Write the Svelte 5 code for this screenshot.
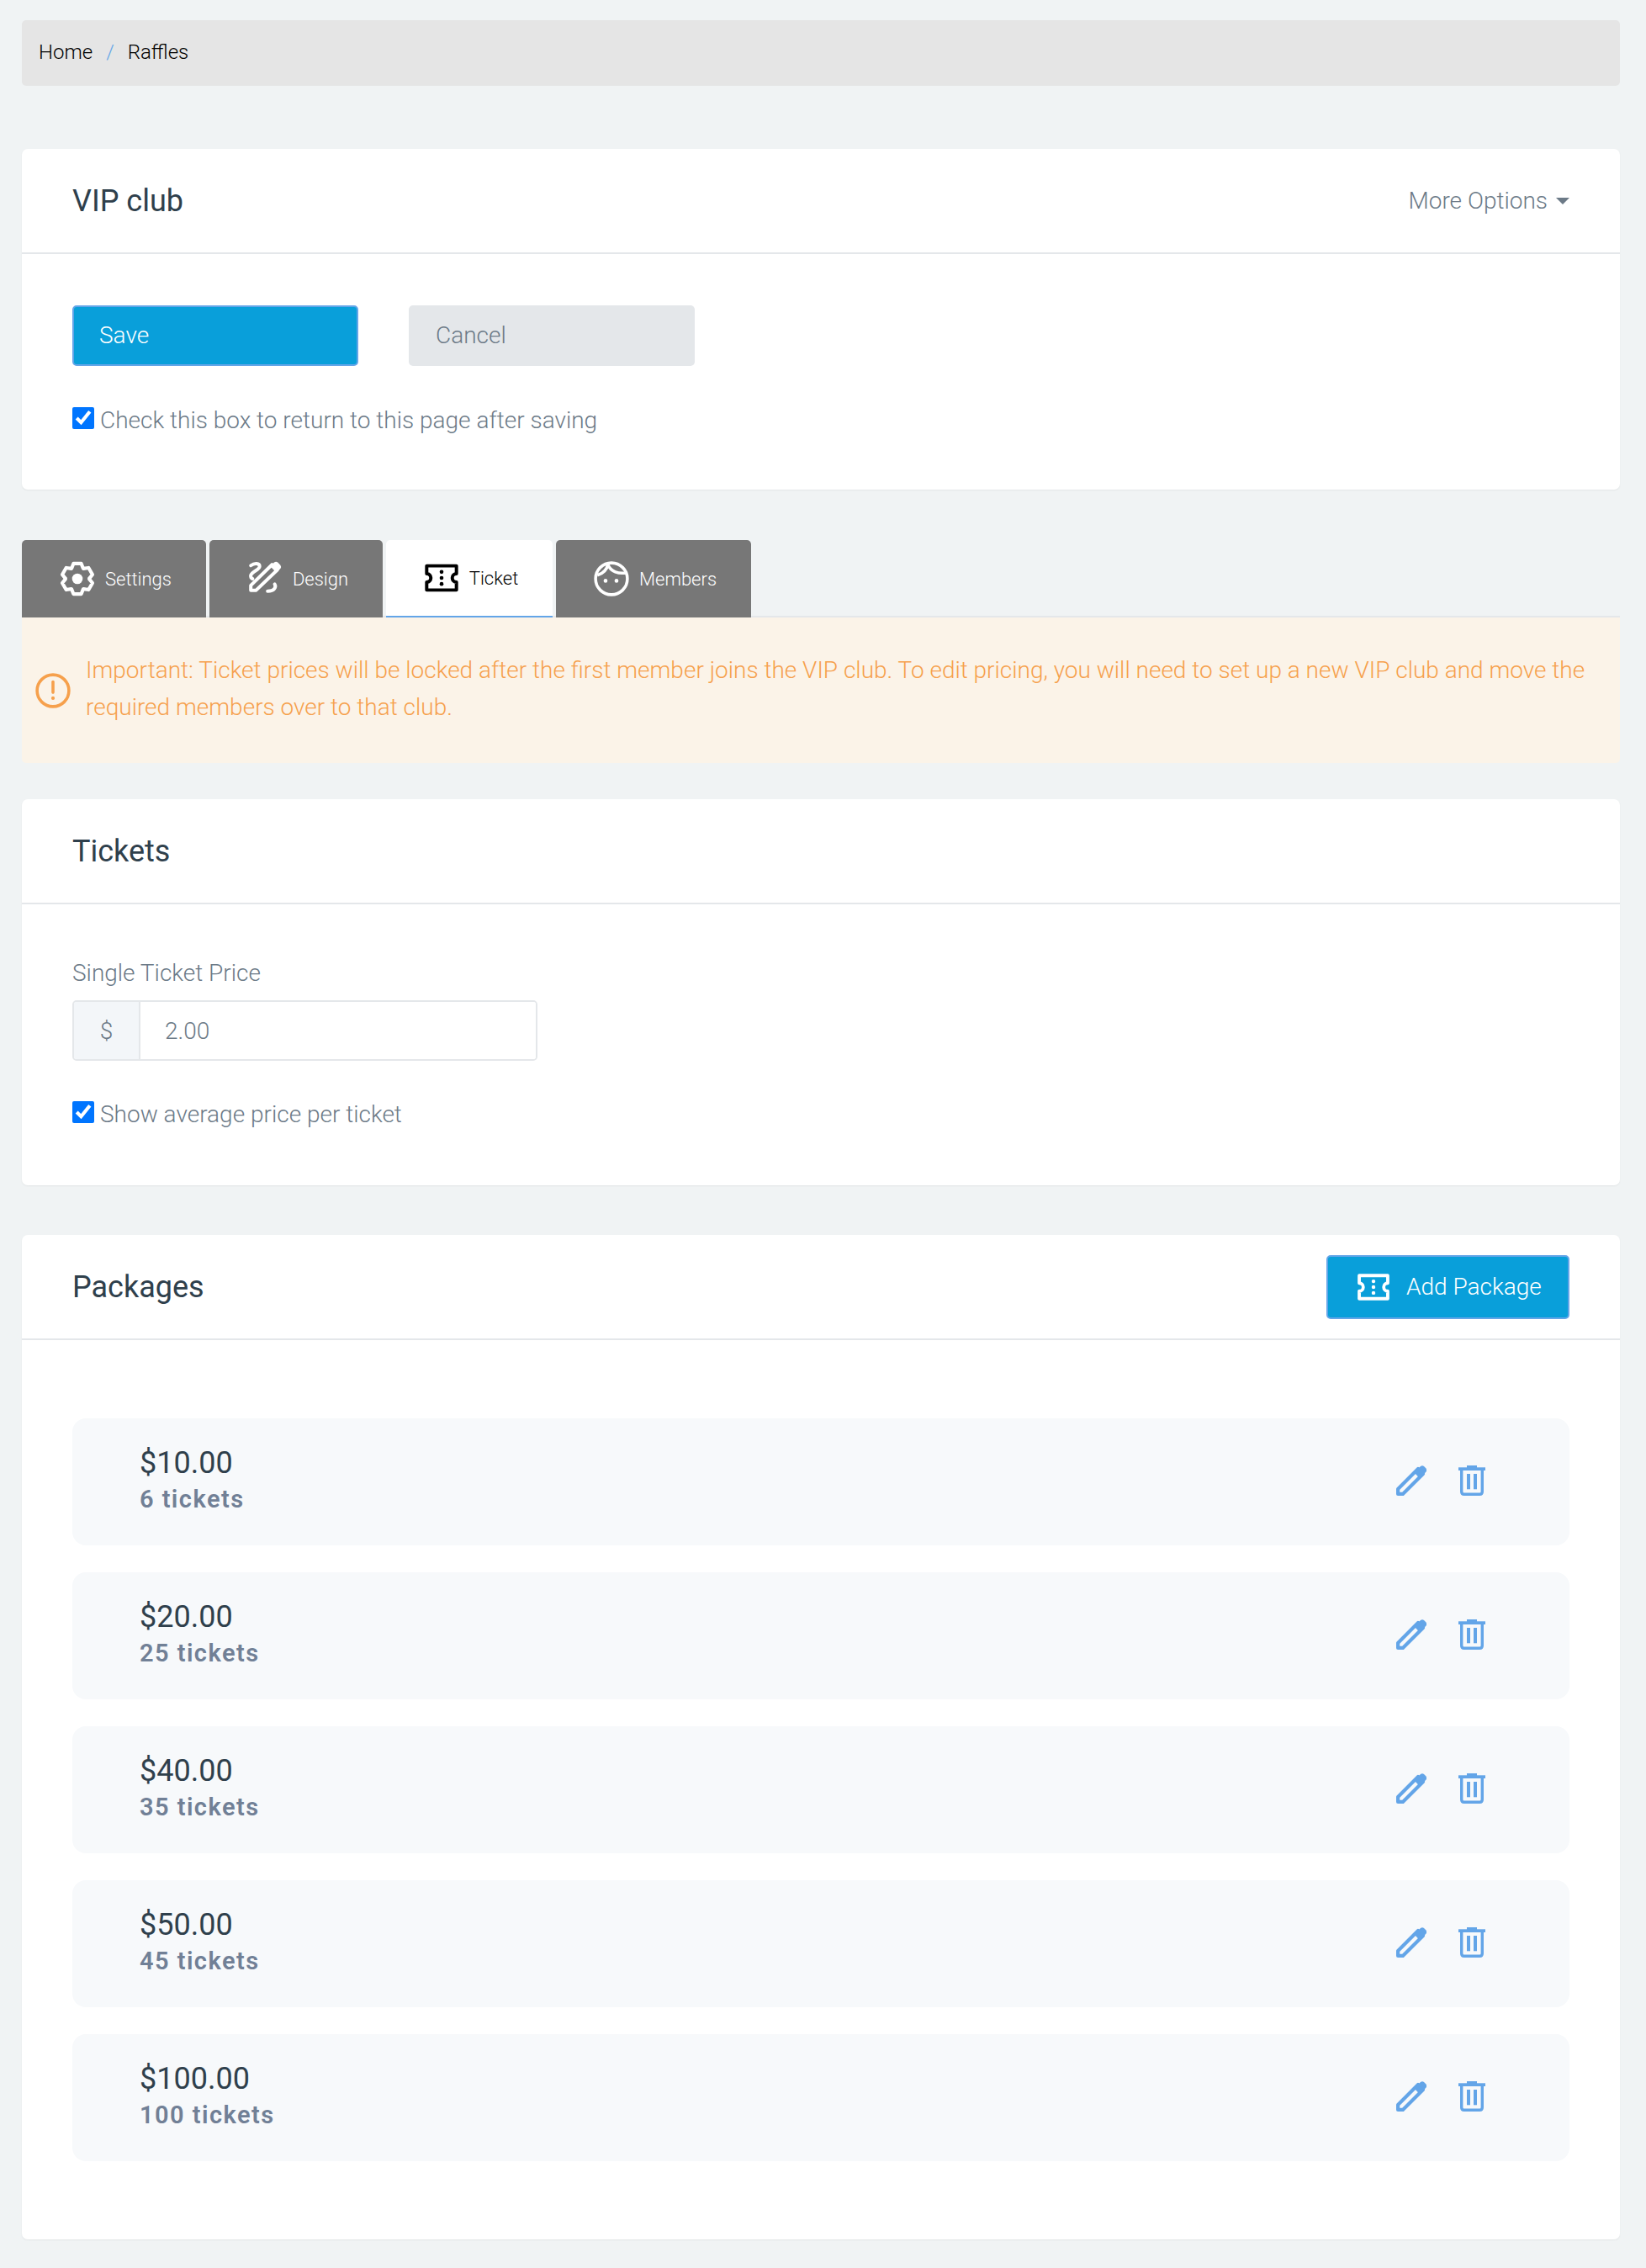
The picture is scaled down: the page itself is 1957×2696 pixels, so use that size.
<script>
  const packages = [
    { price: '$10.00', tickets: '6 tickets' },
    { price: '$20.00', tickets: '25 tickets' },
    { price: '$40.00', tickets: '35 tickets' },
    { price: '$50.00', tickets: '45 tickets' },
    { price: '$100.00', tickets: '100 tickets' }
  ];
  const ticketPath = 'M3 4h32v8.500a4.500 4.500 0 0 0 0 9V30H3v-8.500a4.500 4.500 0 0 0 0-9z';

  // six-tooth cog outline, center 20,20
  function gearPath() {
    const pts = [];
    for (let i = 0; i < 6; i++) {
      const a = (i * 60 - 90) * Math.PI / 180;
      const at = (r, off) => {
        const x = 20 + r * Math.cos(a + off), y = 20 + r * Math.sin(a + off);
        return x.toFixed(1) + ' ' + y.toFixed(1);
      };
      pts.push(at(13.5, -0.5), at(17.8, -0.25), at(17.8, 0.25), at(13.5, 0.5));
    }
    return 'M' + pts.join('L') + 'z';
  }
</script>

{#snippet ticket(cls)}
  <svg class={cls} viewBox="0 0 38 34" fill="none" stroke="currentColor" stroke-width="3.600" stroke-linejoin="round">
    <path d={ticketPath} />
    <g fill="currentColor" stroke="none">
      <circle cx="19" cy="10.500" r="2.100" /><circle cx="19" cy="17" r="2.100" /><circle cx="19" cy="23.500" r="2.100" />
    </g>
  </svg>
{/snippet}

<div class="page">
  <nav class="crumbs">
    <span>Home</span><span class="sep">/</span><span>Raffles</span>
  </nav>

  <section class="card first">
    <header class="card-head">
      <h2>VIP club</h2>
      <span class="more">More Options <i class="caret"></i></span>
    </header>
    <div class="card-body">
      <div class="actions">
        <button class="btn primary wide">Save</button>
        <button class="btn muted wide">Cancel</button>
      </div>
      <label class="check"><input type="checkbox" checked /> Check this box to return to this page after saving</label>
    </div>
  </section>

  <div class="tabs">
    <div class="tab tab-settings">
      <svg class="tab-icon" viewBox="0 0 40 40" fill="none" stroke="currentColor" stroke-width="4" stroke-linejoin="round">
        <path d={gearPath()} />
        <circle cx="20" cy="20" r="6" fill="currentColor" stroke="none" />
      </svg>
      Settings
    </div>
    <div class="tab tab-design">
      <svg class="tab-icon" viewBox="9 7 40 40" fill="none" stroke="currentColor" stroke-width="3.800" stroke-linecap="round" stroke-linejoin="round">
        <path d="M13 40v-5.500L37 11l6 6-24 23z" />
        <path d="M35 13l4.500-4.500q2-1.500 4 0l3 3q1.500 2 0 4L42 20z" fill="currentColor" stroke="none" />
        <path d="M13 12c4-3 10-3 10 1 0 4-8 5-10 10-.6 2 .5 3.500 2 4" />
        <path d="M40 33c2 3 0 8-8 8" />
      </svg>
      Design
    </div>
    <div class="tab active tab-ticket">
      {@render ticket('tab-icon')}
      Ticket
    </div>
    <div class="tab tab-members">
      <svg class="tab-icon" viewBox="6 6 40 40" fill="none" stroke="currentColor" stroke-width="3.400">
        <circle cx="26" cy="26" r="18" />
        <path d="M10 22c6-2 11-6 12-13" />
        <path d="M22 10c3 8 12 11 22 9" />
        <g fill="currentColor" stroke="none"><circle cx="19.300" cy="28.300" r="2.200" /><circle cx="31.700" cy="28.300" r="2.200" /></g>
      </svg>
      Members
    </div>
  </div>

  <div class="alert">
    <svg class="alert-icon" viewBox="0 0 40 40" fill="none" stroke="currentColor" stroke-width="3.400">
      <circle cx="20" cy="20" r="18" />
      <path d="M20 10v12" stroke-linecap="round" />
      <circle cx="20" cy="28.500" r="2" fill="currentColor" stroke="none" />
    </svg>
    <p>Important: Ticket prices will be locked after the first member joins the VIP club. To edit pricing, you will need to set up a new VIP club and move the required members over to that club.</p>
  </div>

  <section class="card tickets">
    <header class="card-head"><h2>Tickets</h2></header>
    <div class="card-body">
      <div class="field-label">Single Ticket Price</div>
      <div class="input-group">
        <span class="addon">$</span>
        <input type="text" value="2.00" />
      </div>
      <label class="check"><input type="checkbox" checked /> Show average price per ticket</label>
    </div>
  </section>

  <section class="card packages">
    <header class="card-head">
      <h2>Packages</h2>
      <button class="btn primary add">{@render ticket('add-icon')} Add Package</button>
    </header>
    <div class="card-body list">
      {#each packages as p}
        <div class="row">
          <div class="info">
            <div class="price">{p.price}</div>
            <div class="count">{p.tickets}</div>
          </div>
          <div class="row-actions">
            <svg class="pencil" viewBox="0 0 36 36" fill="none" stroke="currentColor" stroke-width="4.200" stroke-linejoin="round">
              <path d="M2.100 33.900v-5.800L26 4l6 6L7.900 33.900z" />
              <path d="M21 8l8-7q2-1.500 4 0l2.500 2.500q1.500 2 0 4L28 15.500z" fill="currentColor" stroke="none" />
            </svg>
            <svg class="trash" viewBox="0 0 32 36" fill="none" stroke="currentColor" stroke-width="3.400">
              <g fill="currentColor" stroke="none">
                <rect x="0" y="2.300" width="32" height="3.700" />
                <rect x="10" y="0" width="12" height="3" />
                <rect x="10" y="10" width="4" height="18.300" />
                <rect x="18" y="10" width="4" height="18.300" />
              </g>
              <path d="M3.700 5v26c0 2 1 3.300 3 3.300h18.600c2 0 3-1.300 3-3.300V5" />
            </svg>
          </div>
        </div>
      {/each}
    </div>
  </section>
</div>

<style>
  :global(body) { margin: 0; background: #f0f3f4; }
  .page {
    box-sizing: border-box; height: 2696px; padding: 24px 31px 0 26px;
    font-family: Roboto, "Liberation Sans", sans-serif; font-weight: 300;
    font-size: 28px; color: #6c7a87;
  }
  .crumbs {
    height: 78px; display: flex; align-items: center; gap: 16px; padding: 0 20px 2px;
    background: #e5e5e5; border-radius: 5px; font-size: 24px; color: #000;
    box-sizing: border-box;
  }
  .crumbs .sep { color: #63a5e8; }
  .card { background: #fff; border-radius: 7px; box-shadow: 0 1px 2px rgba(0,0,0,.06); }
  .first { margin-top: 75px; height: 405px; }
  .tickets { margin-top: 43px; height: 459px; }
  .packages { margin-top: 59px; height: 1194px; }
  .card-head {
    box-sizing: border-box; height: 125px; padding: 0 60px; display: flex;
    align-items: center; justify-content: space-between; border-bottom: 2px solid #e4e7ea;
  }
  h2 { margin: 0; font-size: 36px; font-weight: 400; color: #2f404c; }
  .more { display: flex; align-items: center; gap: 8px; }
  .caret { width: 0; height: 0; border: 8px solid transparent; border-top-color: #6c7a87; border-bottom: 0; margin-left: 2px; }
  .card-body { padding: 61px 60px 0; }
  .actions { display: flex; gap: 60px; }
  .btn {
    font: inherit; box-sizing: border-box; border-radius: 5px; text-align: left; padding: 0 30px 2px;
    border: 2px solid transparent;
  }
  .wide { width: 340px; height: 72px; }
  .primary { background: #099fda; border-color: #63a5e8; color: #fff; }
  .muted { background: #e4e7ea; color: #6c7a87; }
  .check { display: flex; align-items: center; gap: 7px; margin-top: 51px; line-height: 28px; }
  .tickets .check { margin-top: 50px; }
  .check input { width: 26px; height: 26px; margin: 0; flex: none; position: relative; top: -3px; }
  .tabs { display: flex; gap: 4px; margin-top: 60px; height: 92px; border-bottom: 2px solid #e4e7ea; box-sizing: border-box; }
  .tab {
    box-sizing: border-box; display: flex; align-items: center; justify-content: center; gap: 12px;
    height: 92px; padding-left: 4px; background: #777; color: #fff; font-size: 22px; border-radius: 5px 5px 0 0; flex: none;
  }
  .tab-settings { width: 219px; }
  .tab-design { width: 206px; }
  .tab-ticket { width: 198px; }
  .tab-members { width: 232px; }
  .tab.active { background: #fff; color: #000; border-bottom: 2px solid #63a5e8; }
  .tab-icon { width: 42px; height: 42px; flex: none; }
  .alert {
    height: 173px; box-sizing: border-box; display: flex; align-items: center; gap: 18px; padding: 0 40px 0 16px;
    background: #fbf3e8; color: #f6a04c; border-radius: 0 0 5px 5px;
  }
  .alert-icon { width: 42px; height: 42px; flex: none; }
  .alert p { margin: 0 0 3px; line-height: 44px; }
  .field-label { margin-top: 3px; line-height: 36px; }
  .input-group {
    margin-top: 14px; width: 553px; height: 72px; box-sizing: border-box; display: flex;
    border: 2px solid #e4e7ea; border-radius: 5px; overflow: hidden;
  }
  .addon { width: 77px; display: flex; align-items: center; justify-content: center; background: #f3f6f9; border-right: 2px solid #e4e7ea; }
  .input-group input { flex: 1; min-width: 0; border: 0; outline: 0; padding: 0 29px; font: inherit; color: #6c7a87; }
  .add { height: 76px; width: 289px; display: flex; align-items: center; gap: 18px; padding: 0 33px; font-size: 28px; white-space: nowrap; }
  .add-icon { width: 42px; height: 36px; flex: none; }
  .list { padding-top: 93px; display: flex; flex-direction: column; gap: 32px; }
  .row {
    height: 151px; box-sizing: border-box; display: flex; align-items: center; justify-content: space-between;
    padding: 0 100px 0 80px; background: #f7f9fb; border-radius: 16px;
  }
  .info { margin-bottom: 10px; }
  .price { font-size: 36px; font-weight: 400; color: #2f404c; line-height: 50px; }
  .count { font-size: 29px; font-weight: 600; color: #718096; letter-spacing: .05em; line-height: 36px; }
  .row-actions { display: flex; gap: 38px; align-items: center; color: #63a5e8; margin-bottom: 4px; }
  .pencil { width: 36px; height: 36px; }
  .trash { width: 32px; height: 36px; }
</style>
